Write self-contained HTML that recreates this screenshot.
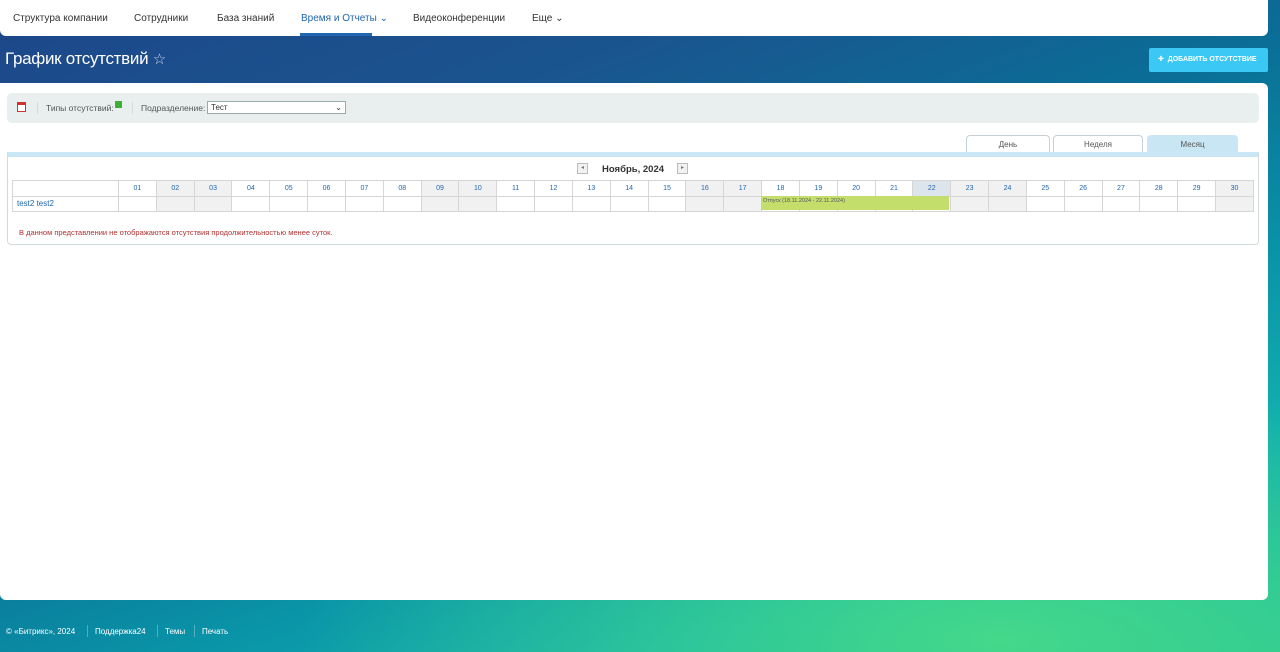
<!DOCTYPE html>
<html><head><meta charset="utf-8"><style>
*{box-sizing:border-box;margin:0;padding:0}
body{width:1280px;height:652px;overflow:hidden;font-family:"Liberation Sans","DejaVu Sans",sans-serif;position:relative;
background:
radial-gradient(ellipse 700px 260px at 1000px 640px,#44d88a 0%,rgba(68,216,138,0.6) 40%,rgba(68,216,138,0) 100%),
linear-gradient(160deg,#1d4689 0%,#1a558f 25%,#0a6e96 45%,#0a95a8 65%,#12b0ae 80%,#22c19a 100%);}
.top{position:absolute;left:0;top:0;width:1268px;height:36px;background:#fff;border-radius:0 0 6px 6px}
.top span{position:absolute;top:13px;font-size:10px;color:#333}
.top .act{color:#2066b0}
.uline{position:absolute;left:300px;top:33px;width:72px;height:3px;background:#2066b0}
h1{position:absolute;left:5px;top:49px;font-size:17px;font-weight:normal;color:#fff;letter-spacing:-0.3px}
h1 small{font-size:15px;color:#c8d6e8}
.btn{position:absolute;left:1149px;top:48px;width:119px;height:24px;background:#3bc8f5;border-radius:2px;color:#fff;font-size:7px;font-weight:bold;line-height:24px;padding-left:9px}
.panel{position:absolute;left:0;top:83px;width:1268px;height:517px;background:#fff;border-radius:0 6px 6px 6px}
.filter{position:absolute;left:7px;top:10px;width:1252px;height:30px;background:#e9eeef;border-radius:5px;font-size:8.5px;color:#555}
.filter span{position:absolute;top:10px}
.sep{position:absolute;top:9px;width:1px;height:12px;background:#d5dadb}
.sel{position:absolute;left:200px;top:8px;width:139px;height:13px;border:1px solid #9aa;background:#fff;font-size:8px;padding-left:3px;line-height:11px;color:#333}
.tab{position:absolute;top:52px;height:17px;border:1px solid #c7cfd4;border-bottom:none;border-radius:4px 4px 0 0;background:#fff;font-size:8px;color:#555;text-align:center;line-height:17px}
.cal{position:absolute;left:7px;top:69px;width:1252px;height:93px;border:1px solid #d3dadd;border-radius:0 0 4px 4px;border-top:5px solid #c8e6f3;background:#fff}
.nav{position:absolute;top:6px;width:11px;height:11px;border:1px solid #bbb;background:#f2f2f2;font-size:6px;color:#777;text-align:center;line-height:9px}
.month{position:absolute;left:594px;top:7px;font-size:9.5px;font-weight:bold;color:#333}
table{position:absolute;left:4px;top:23px;width:1242px;border-collapse:collapse;table-layout:fixed}
td{border:1px solid #d6d6d6;height:15.5px;font-size:7px;color:#2066b0;text-align:center;padding:0}
td.w{background:#f1f1f1}
td.t{background:#dde5ec}
td.n{width:106px;text-align:left;padding-left:4px;font-size:8px}
.bar{position:absolute;left:753px;top:39px;width:188px;height:14px;background:#c3de6a;font-size:5.5px;color:#556;padding:2px 2px}
.note{position:absolute;left:11px;top:71px;font-size:7.5px;color:#b03030}
.foot{position:absolute;top:627px;font-size:8px;color:#fff}
.fs{position:absolute;top:625px;width:1px;height:12px;background:rgba(255,255,255,.3)}
</style></head><body>
<div class="top">
<span style="left:13px">Структура компании</span>
<span style="left:134px">Сотрудники</span>
<span style="left:217px">База знаний</span>
<span class="act" style="left:301px">Время и Отчеты ⌄</span>
<span style="left:413px">Видеоконференции</span>
<span style="left:532px">Еще ⌄</span>
<div class="uline"></div>
</div>
<h1>График отсутствий <small>☆</small></h1>
<div class="btn">✚&nbsp; ДОБАВИТЬ ОТСУТСТВИЕ</div>
<div class="panel">
<div class="filter">
<span style="left:10px;top:9px;width:9px;height:10px;border:1px solid #c33;border-top:3px solid #c33;background:#fff"></span>
<div class="sep" style="left:30px"></div>
<span style="left:39px">Типы отсутствий:</span><span style="left:108px;top:8px;width:7px;height:7px;background:#3cb034"></span>
<div class="sep" style="left:125px"></div>
<span style="left:134px">Подразделение:</span>
<div class="sel">Тест<span style="position:absolute;right:3px;top:0;font-size:8px;color:#333">⌄</span></div>
</div>
<div class="tab" style="left:966px;width:84px">День</div>
<div class="tab" style="left:1053px;width:90px">Неделя</div>
<div class="tab" style="left:1147px;width:91px;background:#c8e6f3;border-color:#c8e6f3">Месяц</div>
<div class="cal">
<div class="nav" style="left:569px">◂</div>
<div class="month">Ноябрь, 2024</div>
<div class="nav" style="left:669px">▸</div>
<table>
<tr><td class="n"></td><td>01</td><td class="w">02</td><td class="w">03</td><td>04</td><td>05</td><td>06</td><td>07</td><td>08</td><td class="w">09</td><td class="w">10</td><td>11</td><td>12</td><td>13</td><td>14</td><td>15</td><td class="w">16</td><td class="w">17</td><td>18</td><td>19</td><td>20</td><td>21</td><td class="t">22</td><td class="w">23</td><td class="w">24</td><td>25</td><td>26</td><td>27</td><td>28</td><td>29</td><td class="w">30</td></tr>
<tr><td class="n">test2 test2</td><td></td><td class="w"></td><td class="w"></td><td></td><td></td><td></td><td></td><td></td><td class="w"></td><td class="w"></td><td></td><td></td><td></td><td></td><td></td><td class="w"></td><td class="w"></td><td></td><td></td><td></td><td></td><td></td><td class="w"></td><td class="w"></td><td></td><td></td><td></td><td></td><td></td><td class="w"></td></tr>
</table>
<div class="bar">Отпуск (18.11.2024 - 22.11.2024)</div>
<div class="note">В данном представлении не отображаются отсутствия продолжительностью менее суток.</div>
</div>
</div>
<div class="foot" style="left:6px">© «Битрикс», 2024</div>
<div class="fs" style="left:87px"></div>
<div class="foot" style="left:95px">Поддержка24</div>
<div class="fs" style="left:157px"></div>
<div class="foot" style="left:165px">Темы</div>
<div class="fs" style="left:194px"></div>
<div class="foot" style="left:202px">Печать</div>
</body></html>
